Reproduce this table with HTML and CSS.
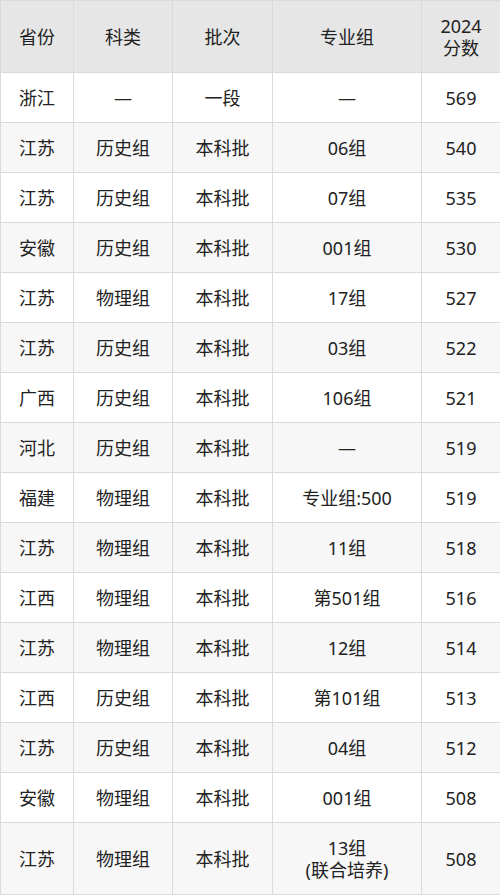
FILE: index.html
```html
<!DOCTYPE html>
<html lang="zh-CN">
<head>
<meta charset="utf-8">
<link rel="stylesheet" href="styles.css">
</head>
<body>
<table class="score-table">
  <colgroup>
    <col class="c1"><col class="c2"><col class="c3"><col class="c4"><col class="c5">
  </colgroup>
  <thead>
    <tr class="head-row">
      <th>省份</th><th>科类</th><th>批次</th><th>专业组</th><th>2024<br>分数</th>
    </tr>
  </thead>
  <tbody>
    <tr><td>浙江</td><td>—</td><td>一段</td><td>—</td><td>569</td></tr>
    <tr><td>江苏</td><td>历史组</td><td>本科批</td><td>06组</td><td>540</td></tr>
    <tr><td>江苏</td><td>历史组</td><td>本科批</td><td>07组</td><td>535</td></tr>
    <tr><td>安徽</td><td>历史组</td><td>本科批</td><td>001组</td><td>530</td></tr>
    <tr><td>江苏</td><td>物理组</td><td>本科批</td><td>17组</td><td>527</td></tr>
    <tr><td>江苏</td><td>历史组</td><td>本科批</td><td>03组</td><td>522</td></tr>
    <tr><td>广西</td><td>历史组</td><td>本科批</td><td>106组</td><td>521</td></tr>
    <tr><td>河北</td><td>历史组</td><td>本科批</td><td>—</td><td>519</td></tr>
    <tr><td>福建</td><td>物理组</td><td>本科批</td><td>专业组:500</td><td>519</td></tr>
    <tr><td>江苏</td><td>物理组</td><td>本科批</td><td>11组</td><td>518</td></tr>
    <tr><td>江西</td><td>物理组</td><td>本科批</td><td>第501组</td><td>516</td></tr>
    <tr><td>江苏</td><td>物理组</td><td>本科批</td><td>12组</td><td>514</td></tr>
    <tr><td>江西</td><td>历史组</td><td>本科批</td><td>第101组</td><td>513</td></tr>
    <tr><td>江苏</td><td>历史组</td><td>本科批</td><td>04组</td><td>512</td></tr>
    <tr><td>安徽</td><td>物理组</td><td>本科批</td><td>001组</td><td>508</td></tr>
    <tr class="tall-row"><td>江苏</td><td>物理组</td><td>本科批</td><td>13组<br>(联合培养)</td><td>508</td></tr>
  </tbody>
</table>
</body>
</html>
```

FILE: styles.css
```css
html, body {
  margin: 0;
  padding: 0;
  background: #ffffff;
}
.score-table {
  width: 500px;
  border-collapse: collapse;
  table-layout: fixed;
  font-family: "Noto Sans", "Noto Sans CJK SC", sans-serif;
  font-size: 18px;
  color: #222222;
}
.c1 { width: 73px; }
.c2 { width: 99px; }
.c3 { width: 100px; }
.c4 { width: 149px; }
.c5 { width: 79px; }
.score-table th,
.score-table td {
  border: 1px solid #dadada;
  text-align: center;
  vertical-align: middle;
  padding: 0;
  line-height: 22px;
  font-weight: normal;
}
.head-row {
  height: 72px;
  background: #e6e6e6;
}
.score-table tbody tr {
  height: 50px;
}
.score-table tbody tr:nth-child(even) {
  background: #f7f7f7;
}
.score-table tbody tr.tall-row {
  height: 72px;
}
```
